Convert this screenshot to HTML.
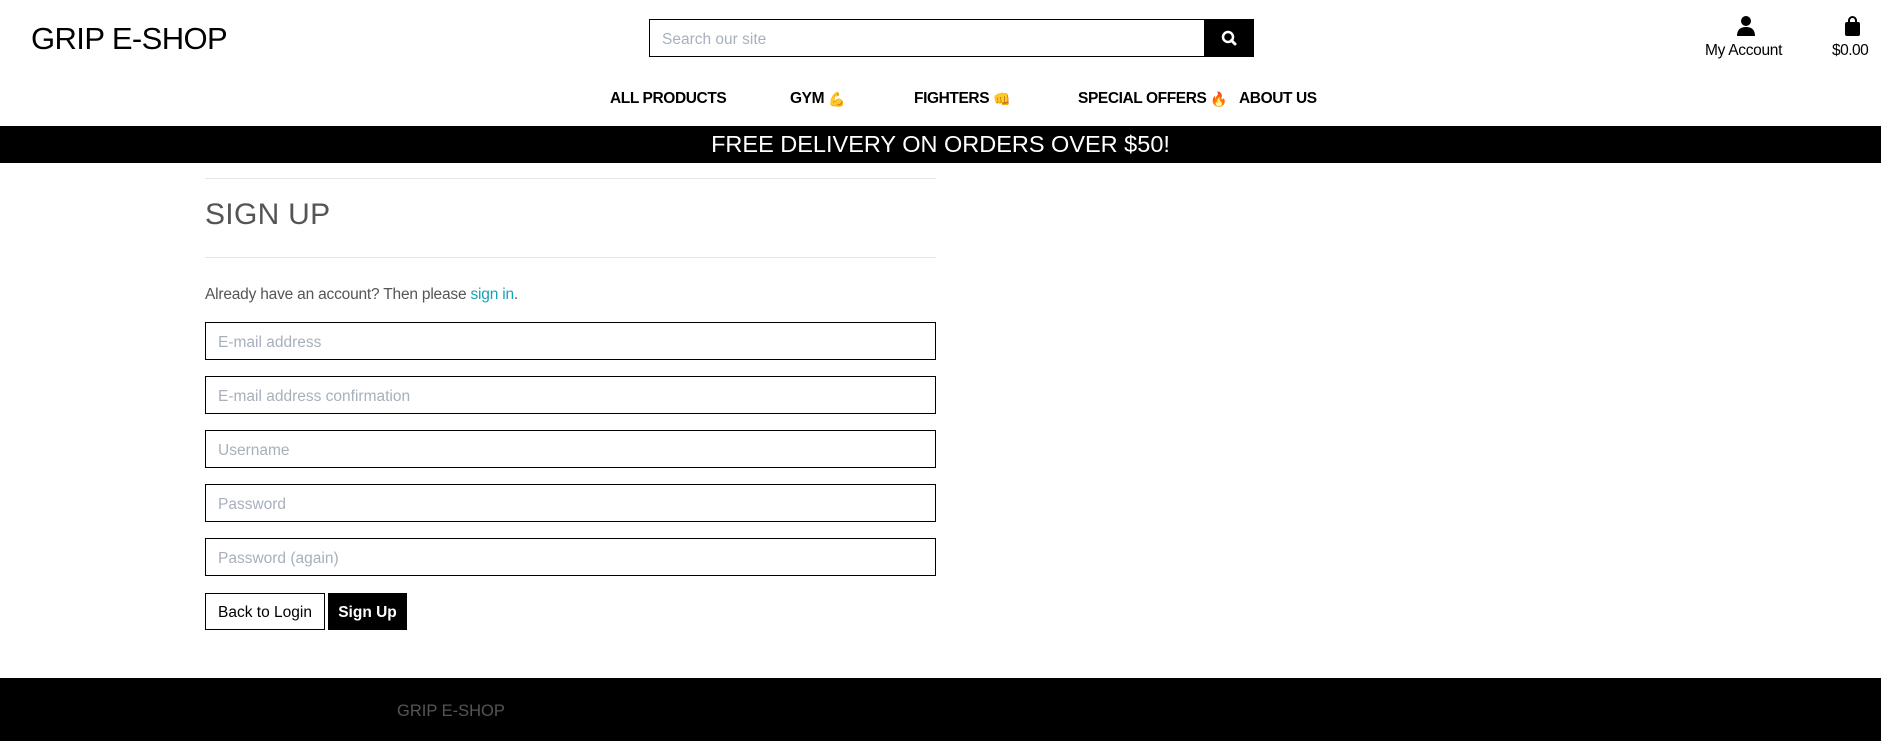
<!DOCTYPE html>
<html><head><meta charset="utf-8"><style>
*{box-sizing:border-box;margin:0;padding:0}
body{width:1881px;height:741px;overflow:hidden;background:#fff;font-family:"Liberation Sans",sans-serif;position:relative;color:#000}
.abs{position:absolute}
.logo{left:31px;top:21px;font-size:31px;letter-spacing:-0.6px}
.search{left:649px;top:19px;width:605px;height:38px;border:1px solid #000}
.search span{position:absolute;left:12px;top:11px;font-size:15.5px;color:#a7b0bc}
.sbtn{position:absolute;right:-1px;top:-1px;width:50px;height:38px;background:#000}
.nav{top:89px;height:20px;line-height:20px;font-size:15.5px;font-weight:bold;letter-spacing:-0.4px;white-space:nowrap}
.nav i{font-style:normal;font-size:14px;display:inline-block;line-height:20px;height:20px;vertical-align:top}
.banner{left:0;top:126px;width:1881px;height:37px;background:#000;color:#fff;font-size:23.5px;text-align:center;line-height:37px}
.hr{left:205px;width:731px;height:1px;background:#e5e5e5}
.h{left:205px;top:198px;font-size:30px;color:#555;letter-spacing:0.3px}
.p{left:205px;top:286px;font-size:15.5px;color:#555;letter-spacing:-0.2px}
.p a{color:#17a2b8;text-decoration:none}
.in{left:205px;width:731px;height:38px;border:1px solid #000;font-size:15.5px;color:#a7b0bc;padding:11px 12px}
.btn{top:593px;height:37px;font-size:15.5px;line-height:37px;text-align:center;border:1px solid #000}
.footer{left:0;top:678px;width:1881px;height:63px;background:#000}
</style></head><body>
<div class="abs logo">GRIP E-SHOP</div>
<div class="abs search"><span>Search our site</span><div class="sbtn">
<svg width="50" height="38" viewBox="0 0 50 38"><circle cx="24" cy="18" r="5" fill="none" stroke="#fff" stroke-width="2.5"/><line x1="27.5" y1="21.5" x2="31" y2="25" stroke="#fff" stroke-width="3" stroke-linecap="round"/></svg></div></div>
<svg class="abs" style="left:1737px;top:16px" width="18" height="20" viewBox="0 0 18 20"><circle cx="9" cy="5" r="5" fill="#000"/><path d="M0 20 Q0 11 9 11 Q18 11 18 20Z" fill="#000"/></svg>
<div class="abs" style="left:1705px;top:42px;font-size:15.5px;letter-spacing:-0.3px">My Account</div>
<svg class="abs" style="left:1844px;top:16px" width="17" height="20" viewBox="0 0 17 20"><path d="M5 7V4.5a3.5 3.5 0 0 1 7 0V7" fill="none" stroke="#000" stroke-width="2"/><rect x="1" y="6" width="15" height="14" rx="2" fill="#000"/></svg>
<div class="abs" style="left:1832px;top:42px;font-size:15.5px;letter-spacing:-0.5px">$0.00</div>
<div class="abs nav" style="left:610px">ALL PRODUCTS</div>
<div class="abs nav" style="left:790px">GYM <i>💪</i></div>
<div class="abs nav" style="left:914px">FIGHTERS <i>👊</i></div>
<div class="abs nav" style="left:1078px">SPECIAL OFFERS <i>🔥</i></div>
<div class="abs nav" style="left:1239px">ABOUT US</div>
<div class="abs banner">FREE DELIVERY ON ORDERS OVER $50!</div>
<div class="abs hr" style="top:178px"></div>
<div class="abs h">SIGN UP</div>
<div class="abs hr" style="top:257px"></div>
<div class="abs p">Already have an account? Then please <a>sign in</a>.</div>
<div class="abs in" style="top:322px">E-mail address</div>
<div class="abs in" style="top:376px">E-mail address confirmation</div>
<div class="abs in" style="top:430px">Username</div>
<div class="abs in" style="top:484px">Password</div>
<div class="abs in" style="top:538px">Password (again)</div>
<div class="abs btn" style="left:205px;width:120px">Back to Login</div>
<div class="abs btn" style="left:328px;width:79px;background:#000;color:#fff;font-weight:bold">Sign Up</div>
<div class="abs footer"><div class="abs" style="left:397px;top:24px;font-size:16.5px;color:#555">GRIP E-SHOP</div></div>
</body></html>
